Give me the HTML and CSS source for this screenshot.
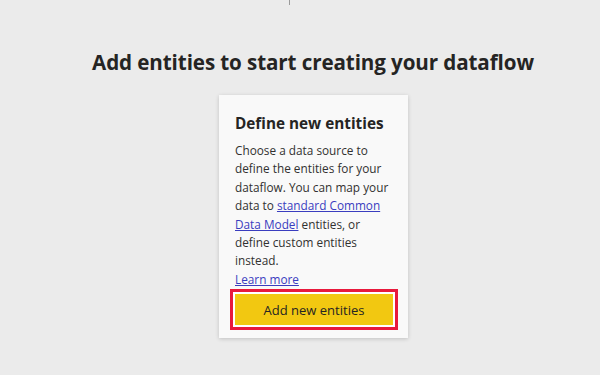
FILE: index.html
```html
<!DOCTYPE html>
<html>
<head>
<meta charset="utf-8">
<link rel="stylesheet" href="styles.css">
</head>
<body>
<div class="page">
  <div class="tick"></div>
  <h1 class="title">Add entities to start creating your dataflow</h1>
  <div class="card">
    <h2 class="card-title">Define new entities</h2>
    <p class="card-text">Choose a data source to define the entities for your dataflow. You can map your data to <a href="#" class="link">standard Common Data Model</a> entities, or define custom entities instead.</p>
    <a href="#" class="link learn">Learn more</a>
    <div class="highlight">
      <button class="btn">Add new entities</button>
    </div>
  </div>
</div>
</body>
</html>
```

FILE: styles.css
```css
html, body {
  margin: 0;
  padding: 0;
  background: #ebebeb;
}
.page {
  width: 600px;
  height: 375px;
  display: flex;
  flex-direction: column;
  align-items: center;
  font-family: "Open Sans", "Noto Sans", sans-serif;
  color: #252423;
  position: relative;
}
.tick {
  position: absolute;
  left: 289px;
  top: 0;
  width: 1px;
  height: 5px;
  background: #9a9a9a;
}
.title {
  margin: 48px 0 0 26px;
  font-size: 20.6px;
  font-weight: 700;
  line-height: 28px;
  letter-spacing: -0.1px;
}
.card {
  margin: 19px 0 0 27px;
  width: 158px;
  padding: 17px 15px 8px 16px;
  background: #f9f9f9;
  box-shadow: 0 1px 4px rgba(0,0,0,0.18);
  display: flex;
  flex-direction: column;
  align-items: flex-start;
}
.card-title {
  margin: 0;
  font-size: 15.3px;
  font-weight: 700;
  line-height: 22px;
}
.card-text {
  margin: 7px 0 0 0;
  font-size: 11.8px;
  line-height: 18.4px;
  color: #323130;
}
.link {
  color: #3a3dbf;
  text-decoration: underline;
}
.learn {
  font-size: 11.8px;
  line-height: 18.4px;
}
.highlight {
  box-sizing: border-box;
  width: 168px;
  margin: 1px 0 0 -5px;
  border: 3px solid #e8193c;
  padding: 2px;
  background: #ffffff;
}
.btn {
  display: block;
  width: 100%;
  height: 31px;
  border: none;
  background: #f2c811;
  font-family: "Open Sans", "Noto Sans", sans-serif;
  font-size: 13px;
  color: #252423;
}
```
